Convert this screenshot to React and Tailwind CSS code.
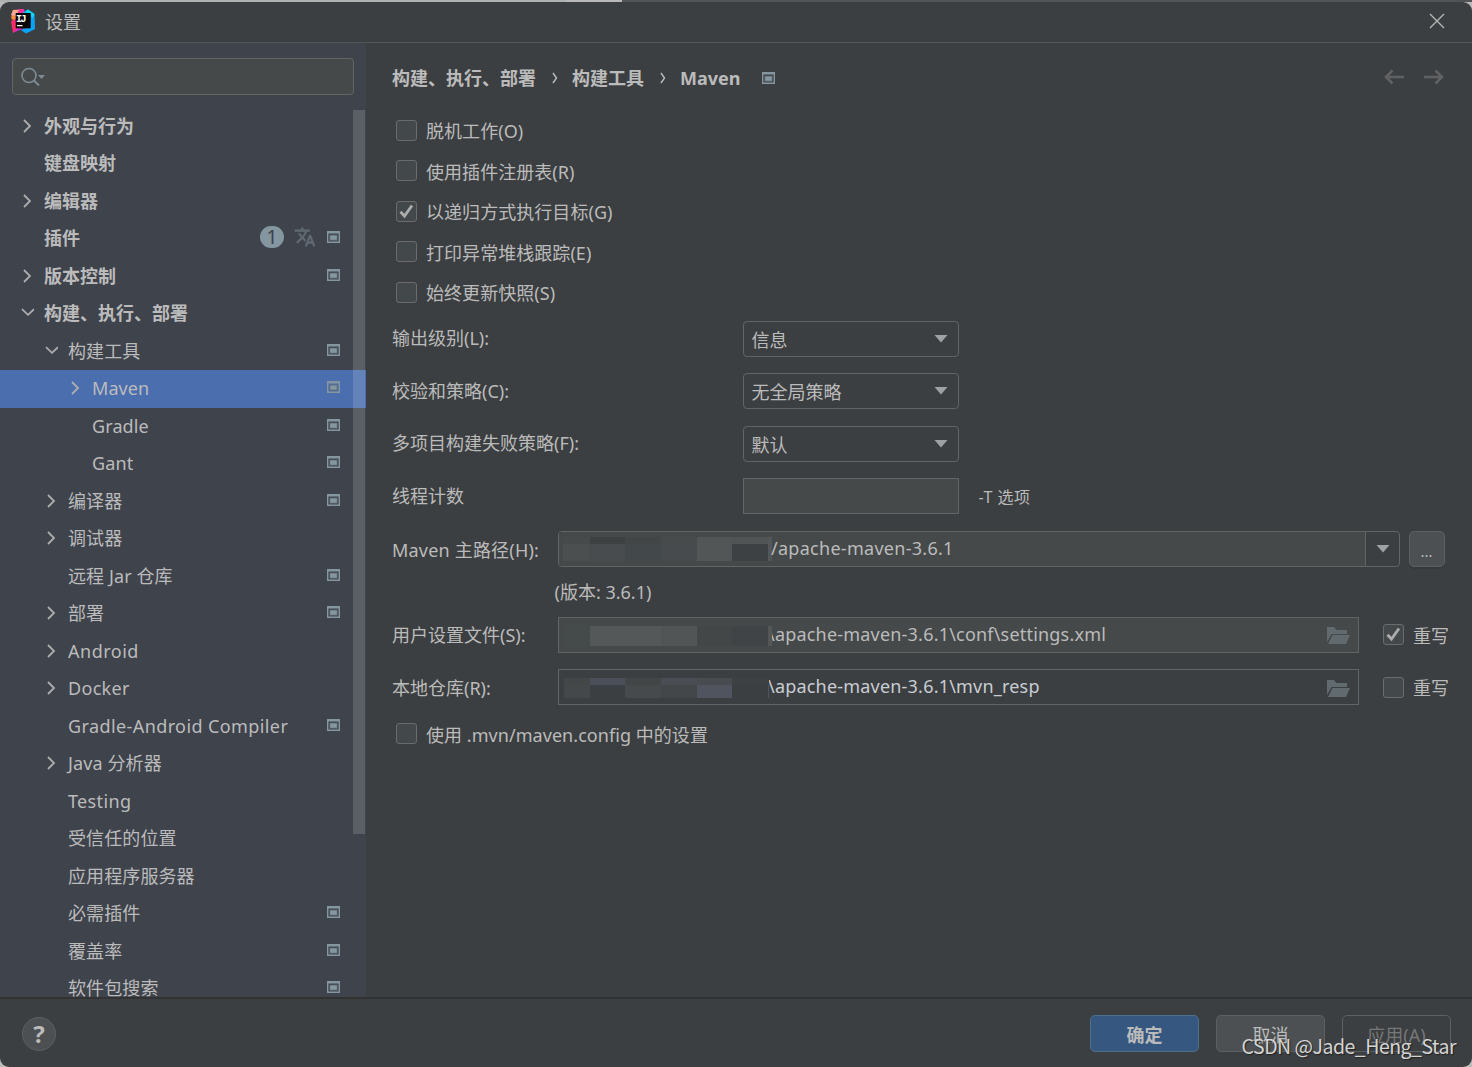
const FONT = "font-['Noto_Sans','Noto_Sans_CJK_SC',sans-serif]";

function ProjectIcon() {
  return (
    <svg width="13" height="12" viewBox="0 0 13 12" className="block shrink-0">
      <path d="M0 0h13v12H0zM1.4 2.6v8h10.2v-8z" fill="#8496a0" fillRule="evenodd" />
      <path d="M2.4 3.7h8.2v6H2.4z" fill="#5b666f" />
      <path d="M3.2 4.4h6.6v4.4H3.2z" fill="#8496a0" />
    </svg>
  );
}

function Chevron({ open }) {
  return (
    <svg width="14" height="14" viewBox="0 0 14 14" className={`block shrink-0 ${open ? "-mt-0.5" : ""}`} fill="none" stroke="#adadad" strokeWidth="1.8">
      {open ? <path d="M2 4.2 8 9.8 14 4.2" /> : <path d="M4 1 10 7 4 13" />}
    </svg>
  );
}

function Logo() {
  return (
    <svg width="24" height="25" viewBox="0 0 24 25" className="block shrink-0">
      <path d="M2 1 12 1 11 12 4 13 0 9z" fill="#fb8a3c" />
      <path d="M2 1 9 .5 8 4 4 7 0 6z" fill="#fba890" />
      <path d="M0 12 5 10 9 18 2 24z" fill="#fc2d68" />
      <path d="M8 0 13 0 14 8 6 7z" fill="#fd2f9a" />
      <path d="M2 24 6 19 15 20 8 21z" fill="#d92bd0" />
      <path d="M12 3 17 .5 23.5 5 24 20 15 24.500 10 21 17 18z" fill="#08a4f6" />
      <path d="M14 3 17 .5 23.500 5 22 9z" fill="#12d4f4" />
      <rect x="4.700" y="4" width="15" height="15.300" fill="#080408" />
      <text x="5" y="12.500" fontSize="10" fontWeight="700" fill="#fff" fontFamily="Liberation Mono, monospace" letterSpacing="-1.500">IJ</text>
      <path d="M6 16h5.500v1.300H6z" fill="#fff" />
    </svg>
  );
}

function TranslateIcon() {
  return (
    <svg width="22" height="22" viewBox="0 0 24 24" className="block shrink-0" fill="#626b74" stroke="#626b74" strokeWidth=".5">
      <path d="M12.870 15.070l-2.540-2.510.03-.03A17.520 17.520 0 0 0 14.070 6H17V4h-7V2H8v2H1v1.990h11.170C11.500 7.920 10.440 9.750 9 11.350 8.070 10.320 7.300 9.190 6.690 8h-2c.73 1.630 1.730 3.170 2.980 4.560l-5.090 5.020L4 19l5-5 3.110 3.110.76-2.040zM18.500 10h-2L12 22h2l1.120-3h4.750L21 22h2l-4.500-12zm-2.620 7l1.620-4.330L19.120 17h-3.240z" />
    </svg>
  );
}

const TREE = [
  { t: "外观与行为", d: 0, c: "closed", b: true },
  { t: "键盘映射", d: 0, b: true },
  { t: "编辑器", d: 0, c: "closed", b: true },
  { t: "插件", d: 0, b: true, p: true, badge: true },
  { t: "版本控制", d: 0, c: "closed", b: true, p: true },
  { t: "构建、执行、部署", d: 0, c: "open", b: true },
  { t: "构建工具", d: 1, c: "open", p: true },
  { t: "Maven", d: 2, c: "closed", p: true, sel: true },
  { t: "Gradle", d: 2, p: true },
  { t: "Gant", d: 2, p: true },
  { t: "编译器", d: 1, c: "closed", p: true },
  { t: "调试器", d: 1, c: "closed" },
  { t: "远程 Jar 仓库", d: 1, p: true },
  { t: "部署", d: 1, c: "closed", p: true },
  { t: "Android", d: 1, c: "closed", track: "tracking-[0.5px]" },
  { t: "Docker", d: 1, c: "closed", track: "tracking-[0.3px]" },
  { t: "Gradle-Android Compiler", d: 1, p: true, track: "tracking-[0.4px]" },
  { t: "Java 分析器", d: 1, c: "closed" },
  { t: "Testing", d: 1, track: "tracking-[0.35px]" },
  { t: "受信任的位置", d: 1 },
  { t: "应用程序服务器", d: 1 },
  { t: "必需插件", d: 1, p: true },
  { t: "覆盖率", d: 1, p: true },
  { t: "软件包搜索", d: 1, p: true },
];

const INDENT = ["pl-5", "pl-11", "pl-[68px]"];

function TreeRow({ row }) {
  return (
    <div className={`flex h-[37.5px] shrink-0 items-center pr-[26px] pb-px ${INDENT[row.d]} ${row.sel ? "bg-[#4b6eaf]" : ""}`}>
      <span className="w-6 shrink-0">{row.c && <Chevron open={row.c === "open"} />}</span>
      <span className={`grow whitespace-nowrap ${row.b ? "font-bold" : row.track || "tracking-[0.1px]"}`}>{row.t}</span>
      {row.badge && (
        <span className="mr-[11px] flex items-center gap-2.5 pb-0.5">
          <span className="flex h-[22px] w-6 items-center justify-center rounded-full bg-[#8496a0] text-[20px] text-[#3e434c]">1</span>
          <TranslateIcon />
        </span>
      )}
      {row.p && <span className="pb-0.5"><ProjectIcon /></span>}
    </div>
  );
}

function Sidebar() {
  return (
    <div className="relative flex w-[366px] shrink-0 flex-col overflow-hidden bg-[#3f434c]">
      <div className="mx-3 mt-[15px] flex h-[37px] shrink-0 items-center rounded-[4px] border border-[#646464] bg-[#45494a] pl-2">
        <svg width="26" height="20" viewBox="0 0 26 20" fill="none" stroke="#7d8b95" strokeWidth="1.600">
          <circle cx="8" cy="8.500" r="7" />
          <path d="M13 13.500 18 18.500" strokeWidth="2" />
          <path d="M17 8h7l-3.500 4z" fill="#7d8b95" stroke="none" />
        </svg>
      </div>
      <div className="mt-[12.500px] flex flex-col">
        {TREE.map((r) => <TreeRow key={r.t} row={r} />)}
      </div>
      <div className="absolute top-[67px] right-px h-[724px] w-3 bg-white/15" />
    </div>
  );
}

function Check({ on }) {
  return (
    <span className="flex size-[21px] shrink-0 items-center justify-center rounded-[3px] border border-[#6b6b6b] bg-[#43494a]">
      {on && (
        <svg width="17" height="17" viewBox="0 0 17 17" fill="none" stroke="#adadad" strokeWidth="2.800">
          <path d="M2.500 8.800 6.500 13 14 2.500" />
        </svg>
      )}
    </span>
  );
}

function CheckRow({ on, children }) {
  return (
    <div className="flex h-[40.5px] items-center gap-[9px] pl-1 tracking-[0.05px]">
      <Check on={on} />
      <span className="whitespace-nowrap pt-0.5">{children}</span>
    </div>
  );
}

function Triangle() {
  return (
    <svg width="14" height="8" viewBox="0 0 14 8" className="block shrink-0"><path d="M.5 0h13L7 7.600z" fill="#9fa2a4" /></svg>
  );
}

function SelectRow({ label, value }) {
  return (
    <div className="flex h-[52.5px] items-center">
      <span className="w-[350.500px] whitespace-nowrap pb-px">{label}</span>
      <div className="flex h-9 w-[216px] items-center justify-between rounded-[4px] border border-[#646464] pr-2.5 pl-2">
        <span className="pt-0.5">{value}</span>
        <Triangle />
      </div>
    </div>
  );
}

function Mosaic({ rows }) {
  return (
    <span className="flex shrink-0 flex-col">
      {rows.map(([h, cells], i) => (
        <span key={i} className="flex" style={{ height: h }}>
          {cells.map(([w, c], j) => <span key={j} style={{ width: w, background: c }} />)}
        </span>
      ))}
    </span>
  );
}

const HOME = [
  [7, [[27, "#464a4a"], [35, "#3e4142"], [36, "#424646"], [36, "#484b4c"], [35, "#535657"], [36, "#515455"], [4, "#535757"]]],
  [17, [[27, "#4b4f4f"], [35, "#484c4e"], [36, "#43484a"], [36, "#474b4e"], [35, "#535657"], [36, "#3d4144"], [4, "#535757"]]],
];
const USER = [
  [20, [[26, "#454a4a"], [71, "#545858"], [36, "#515555"], [35, "#434748"], [36, "#404446"], [4, "#535757"]]],
];
const REPO = [
  [7, [[26, "#434748"], [35, "#4b4f59"], [36, "#424646"], [36, "#4a4d53"], [35, "#484b50"], [36, "#3e4143"], [1, "#3c3f41"]]],
  [13, [[26, "#44484a"], [35, "#3c3f41"], [36, "#464a4c"], [36, "#434749"], [35, "#50545f"], [36, "#3c3f42"], [1, "#50545c"]]],
];

function Folder() {
  return (
    <svg width="23" height="17" viewBox="0 0 23 17" className="block shrink-0" fill="#616a6e">
      <path d="M0 0h7l2.500 3H20v4H4.500L0 15z" />
      <path d="M5.500 8H23l-4 9H1z" />
    </svg>
  );
}

function FileRow({ label, mosaic, text, on, filled }) {
  return (
    <div className="flex h-[52.5px] items-center">
      <span className="w-[166px] shrink-0 whitespace-nowrap pt-px">{label}</span>
      <div className={`flex h-9 w-[801px] items-center border border-[#646464] pr-2 pl-[5px] ${filled ? "bg-[#45494a]" : "text-[#c8cdd3]"}`}>
        <span className="z-10 pt-0.5"><Mosaic rows={mosaic} /></span>
        <span className={`grow whitespace-nowrap pb-0.5 tracking-[0.2px] ${filled ? "-ml-1" : "-ml-px"}`}>{text}</span>
        <span className="pt-0.5"><Folder /></span>
      </div>
      <div className="ml-6 flex items-center gap-[9px]">
        <Check on={on} />
        <span className="whitespace-nowrap pt-0.5">重写</span>
      </div>
    </div>
  );
}

function Arrow({ flip }) {
  return (
    <svg width="20" height="16" viewBox="0 0 20 16" className={flip ? "-scale-x-100" : ""} fill="none" stroke="#5f6163" strokeWidth="2.600">
      <path d="M20 8H2M8.500 1.500 2 8l6.500 6.500" />
    </svg>
  );
}

function Crumb() {
  return <svg width="6" height="12" viewBox="0 0 6 12" fill="none" stroke="#bbb" strokeWidth="1.400"><path d="M1 1 4.500 6 1 11" /></svg>;
}

function Main() {
  return (
    <div className="flex grow flex-col pl-[26px]">
      <div className="flex h-[67px] items-center pt-0.5 pr-7 font-bold">
        <span>构建、执行、部署</span>
        <span className="pr-3.5 pl-4"><Crumb /></span>
        <span>构建工具</span>
        <span className="pr-3.5 pl-4"><Crumb /></span>
        <span>Maven</span>
        <span className="ml-[21.500px] grow pt-px"><ProjectIcon /></span>
        <span className="flex gap-5 pb-px"><Arrow /><Arrow flip /></span>
      </div>
      <CheckRow>脱机工作(O)</CheckRow>
      <CheckRow>使用插件注册表(R)</CheckRow>
      <CheckRow on>以递归方式执行目标(G)</CheckRow>
      <CheckRow>打印异常堆栈跟踪(E)</CheckRow>
      <CheckRow>始终更新快照(S)</CheckRow>
      <SelectRow label="输出级别(L):" value="信息" />
      <SelectRow label="校验和策略(C):" value="无全局策略" />
      <SelectRow label="多项目构建失败策略(F):" value="默认" />
      <div className="flex h-[52.5px] items-center">
        <span className="w-[350.500px]">线程计数</span>
        <div className="h-9 w-[216px] border border-[#646464] bg-[#45494a]" />
        <span className="ml-5 pt-px text-[16px] tracking-[0.5px]">-T 选项</span>
      </div>
      <div className="flex h-[52.5px] items-center">
        <span className="w-[166px] shrink-0 whitespace-nowrap pt-0.5 tracking-[0.2px]">Maven 主路径(H):</span>
        <div className="flex h-9 w-[842px] overflow-hidden rounded-[4px] border border-[#646464]">
          <div className="flex grow items-center bg-[#45494a] pl-1">
            <Mosaic rows={HOME} />
            <span className="-ml-px whitespace-nowrap pb-0.5 tracking-[0.28px]">/apache-maven-3.6.1</span>
          </div>
          <div className="flex w-[34px] items-center justify-center border-l border-[#646464]"><Triangle /></div>
        </div>
        <div className="ml-[8.500px] flex h-9 w-[36px] items-center justify-center rounded-[5px] border border-[#5e6060] bg-[#4c5052] pt-1 text-[15px] shadow-[0_2px_0_#36393a]">...</div>
      </div>
      <div className="flex h-[33.5px] items-center pt-px pl-[162.500px]">(版本: 3.6.1)</div>
      <FileRow label="用户设置文件(S):" mosaic={USER} text="\apache-maven-3.6.1\conf\settings.xml" on filled />
      <FileRow label="本地仓库(R):" mosaic={REPO} text="\apache-maven-3.6.1\mvn_resp" />
      <CheckRow>使用 .mvn/maven.config 中的设置</CheckRow>
    </div>
  );
}

function Footer() {
  const base = "flex h-[37px] w-[109px] items-center justify-center rounded-[5px] border pt-0.5";
  return (
    <div className="relative flex h-[70px] shrink-0 items-center border-t-2 border-[#323232] pt-px pr-[21px] pl-[22px]">
      <span className="flex size-[34px] items-center justify-center rounded-full border border-[#5e6060] bg-[#4c5052] text-2xl font-bold">?</span>
      <div className="ml-auto flex gap-[17px]">
        <span className={`${base} border-[#4c708c] bg-[#365880] font-bold`}>确定</span>
        <span className={`${base} border-[#5e6060] bg-[#4c5052]`}>取消</span>
        <span className={`${base} border-[#5e6060] text-[#777]`}>应用(A)</span>
      </div>
      <span className="absolute right-4 bottom-[9px] whitespace-nowrap font-['Noto_Sans_CJK_SC',sans-serif] text-[19.500px] tracking-[-0.500px] text-[#d4d4d4] [text-shadow:1px_1px_1px_#222]">CSDN @Jade_Heng_Star</span>
    </div>
  );
}

export default function App() {
  return (
    <div className={`flex h-[1067px] w-[1472px] flex-col overflow-hidden bg-[#b9bbbb] text-[18px] leading-6 text-[#bbbbbb] ${FONT}`}>
      <div className="flex h-0.5 shrink-0">
        <span className="w-[566px] bg-[#b0b2b2]" />
        <span className="w-[56px] bg-[#b9b9b9]" />
        <span className="grow bg-[#515355]" />
      </div>
      <div className="flex min-h-0 grow flex-col overflow-hidden rounded-[9px] bg-[#3c3f41]">
        <div className="flex h-[41px] shrink-0 items-center border-b border-[#515658] pr-[27px] pb-0.5 pl-[11px]">
          <Logo />
          <span className="ml-2.5 grow pt-0.5">设置</span>
          <svg width="16" height="16" viewBox="0 0 16 16" fill="none" stroke="#b4b6b7" strokeWidth="1.400"><path d="M1 1 15 15M15 1 1 15" /></svg>
        </div>
        <div className="flex min-h-0 grow">
          <Sidebar />
          <Main />
        </div>
        <Footer />
      </div>
    </div>
  );
}
